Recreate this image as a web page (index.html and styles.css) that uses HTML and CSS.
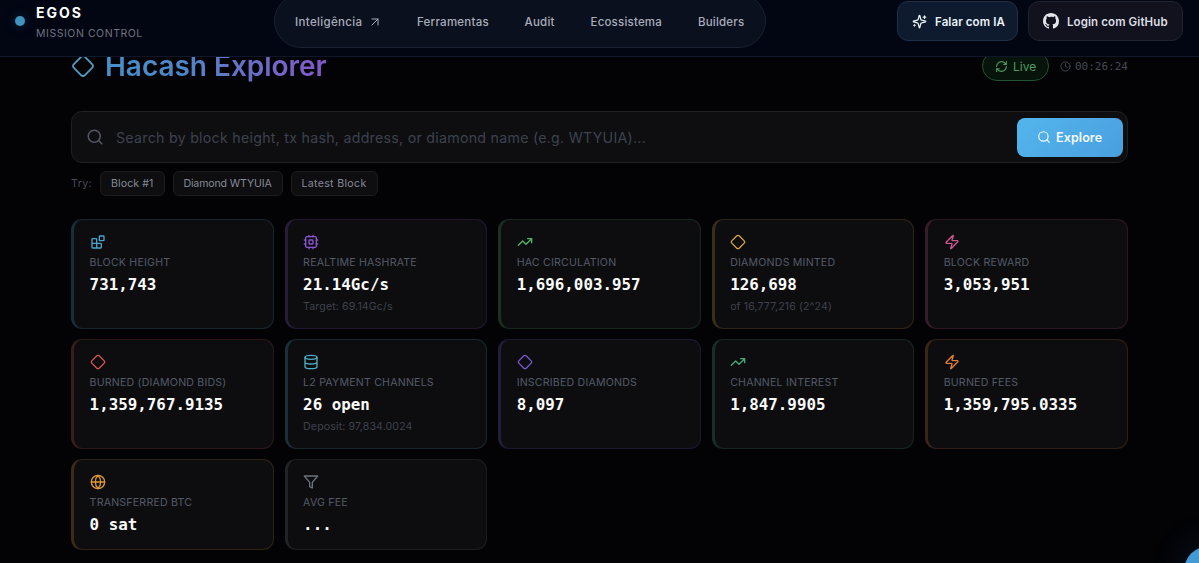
FILE: index.html
```html
<!DOCTYPE html>
<html lang="pt-BR">
<head>
<meta charset="utf-8">
<title>Hacash Explorer</title>
<link rel="stylesheet" href="styles.css">
</head>
<body>
<svg class="defs" aria-hidden="true">
  <symbol id="diamond" viewBox="0 0 24 24"><path d="M2.7 10.3a2.41 2.41 0 0 0 0 3.41l7.59 7.59a2.41 2.41 0 0 0 3.41 0l7.59-7.59a2.41 2.41 0 0 0 0-3.41l-7.59-7.59a2.41 2.41 0 0 0-3.41 0Z"/></symbol>
  <symbol id="trend" viewBox="0 0 24 24"><path d="m22 7-8.5 8.5-5-5L2 17M16 7h6v6"/></symbol>
  <symbol id="zap" viewBox="0 0 24 24"><path d="M4 14a1 1 0 0 1-.78-1.63l9.9-10.2a.5.5 0 0 1 .86.46l-1.92 6.02A1 1 0 0 0 13 10h7a1 1 0 0 1 .78 1.63l-9.9 10.2a.5.5 0 0 1-.86-.46l1.92-6.02A1 1 0 0 0 11 14z"/></symbol>
  <symbol id="search" viewBox="0 0 24 24"><circle cx="11" cy="11" r="8"/><path d="m21 21-4.3-4.3"/></symbol>
</svg>
<header class="topbar">
  <div class="brand">
    <i class="dot"></i>
    <div class="brand-text"><b>EGOS</b><span>MISSION CONTROL</span></div>
  </div>
  <nav class="nav">
    <a class="n1"><span>Inteligência</span> <svg class="icon arrow" viewBox="0 0 24 24"><path d="M6 6h12v12M6 18 18 6"/></svg></a>
    <a class="n2">Ferramentas</a><a class="n3">Audit</a><a class="n4">Ecossistema</a><a class="n5">Builders</a>
  </nav>
  <div class="actions">
    <button class="btn ai"><svg class="icon" viewBox="0 0 24 24"><path d="M9.94 15.5A2 2 0 0 0 8.5 14.06l-6.14-1.58a.5.5 0 0 1 0-.96L8.5 9.94A2 2 0 0 0 9.94 8.5l1.58-6.14a.5.5 0 0 1 .96 0l1.58 6.14a2 2 0 0 0 1.44 1.44l6.14 1.58a.5.5 0 0 1 0 .96l-6.14 1.58a2 2 0 0 0-1.44 1.44l-1.58 6.14a.5.5 0 0 1-.96 0zM20 3v4M22 5h-4M4 17v2M5 18H3"/></svg><span>Falar com IA</span></button>
    <button class="btn github"><svg class="octocat" viewBox="0 0 16 16"><path d="M8 0C3.58 0 0 3.58 0 8c0 3.54 2.29 6.53 5.47 7.59.4.07.55-.17.55-.38 0-.19-.01-.82-.01-1.49-2.01.37-2.53-.49-2.69-.94-.09-.23-.48-.94-.82-1.13-.28-.15-.68-.52-.01-.53.63-.01 1.08.58 1.23.82.72 1.21 1.87.87 2.33.66.07-.52.28-.87.51-1.07-1.78-.2-3.64-.89-3.64-3.95 0-.87.31-1.59.82-2.15-.08-.2-.36-1.02.08-2.12 0 0 .67-.21 2.2.82A7.6 7.6 0 0 1 8 3.87c.68 0 1.36.09 2 .27 1.53-1.04 2.2-.82 2.2-.82.44 1.1.16 1.92.08 2.12.51.56.82 1.27.82 2.15 0 3.07-1.87 3.75-3.65 3.95.29.25.54.73.54 1.48 0 1.07-.01 1.93-.01 2.2 0 .21.15.46.55.38A8.01 8.01 0 0 0 16 8c0-4.42-3.58-8-8-8z"/></svg><span>Login com GitHub</span></button>
  </div>
</header>
<main class="page">
  <div class="heading">
    <svg class="icon"><use href="#diamond"/></svg>
    <h1>Hacash Explorer</h1>
    <span class="live"><svg class="icon" viewBox="0 0 24 24"><path d="M3 12a9 9 0 0 1 9-9 9.75 9.75 0 0 1 6.74 2.74L21 8M21 3v5h-5M21 12a9 9 0 0 1-9 9 9.75 9.75 0 0 1-6.74-2.74L3 16M8 16H3v5"/></svg>Live</span>
    <span class="clock"><svg class="icon" viewBox="0 0 24 24"><circle cx="12" cy="12" r="10"/><path d="M12 6v6l4 2"/></svg>00:26:24</span>
  </div>
  <div class="search">
    <svg class="icon"><use href="#search"/></svg>
    <span class="placeholder">Search by block height, tx hash, address, or diamond name (e.g. WTYUIA)...</span>
    <button class="explore"><svg class="icon"><use href="#search"/></svg><span>Explore</span></button>
  </div>
  <div class="try"><span class="try-label">Try:</span><a class="c1">Block #1</a><a class="c2">Diamond WTYUIA</a><a class="c3">Latest Block</a></div>
  <section class="grid">
    <article class="card sky"><svg class="icon" viewBox="0 0 24 24"><rect x="14" y="3" width="7" height="7" rx="1"/><path d="M10 21V8a1 1 0 0 0-1-1H4a1 1 0 0 0-1 1v12a1 1 0 0 0 1 1h12a1 1 0 0 0 1-1v-5a1 1 0 0 0-1-1H3"/></svg><h2>BLOCK HEIGHT</h2><strong>731,743</strong></article>
    <article class="card purple"><svg class="icon" viewBox="0 0 24 24"><rect x="4" y="4" width="16" height="16" rx="2"/><rect x="9" y="9" width="6" height="6" rx="1"/><path d="M15 2v2M15 20v2M2 15h2M2 9h2M20 15h2M20 9h2M9 2v2M9 20v2"/></svg><h2>REALTIME HASHRATE</h2><strong>21.14Gc/s</strong><small>Target: 69.14Gc/s</small></article>
    <article class="card green"><svg class="icon"><use href="#trend"/></svg><h2>HAC CIRCULATION</h2><strong>1,696,003.957</strong></article>
    <article class="card amber"><svg class="icon"><use href="#diamond"/></svg><h2>DIAMONDS MINTED</h2><strong>126,698</strong><small>of 16,777,216 (2^24)</small></article>
    <article class="card pink"><svg class="icon"><use href="#zap"/></svg><h2>BLOCK REWARD</h2><strong>3,053,951</strong></article>
    <article class="card red"><svg class="icon"><use href="#diamond"/></svg><h2>BURNED (DIAMOND BIDS)</h2><strong>1,359,767.9135</strong></article>
    <article class="card cyan"><svg class="icon" viewBox="0 0 24 24"><ellipse cx="12" cy="5" rx="9" ry="3"/><path d="M3 5v14a9 3 0 0 0 18 0V5M3 12a9 3 0 0 0 18 0"/></svg><h2>L2 PAYMENT CHANNELS</h2><strong>26 open</strong><small>Deposit: 97,834.0024</small></article>
    <article class="card violet"><svg class="icon"><use href="#diamond"/></svg><h2>INSCRIBED DIAMONDS</h2><strong>8,097</strong></article>
    <article class="card emerald"><svg class="icon"><use href="#trend"/></svg><h2>CHANNEL INTEREST</h2><strong>1,847.9905</strong></article>
    <article class="card orange"><svg class="icon"><use href="#zap"/></svg><h2>BURNED FEES</h2><strong>1,359,795.0335</strong></article>
    <article class="card gold"><svg class="icon" viewBox="0 0 24 24"><circle cx="12" cy="12" r="10"/><path d="M12 2a14.5 14.5 0 0 0 0 20 14.5 14.5 0 0 0 0-20M2 12h20"/></svg><h2>TRANSFERRED BTC</h2><strong>0 sat</strong></article>
    <article class="card slate"><svg class="icon" viewBox="0 0 24 24"><path d="M22 3H2l8 9.46V19l4 2v-8.54z"/></svg><h2>AVG FEE</h2><strong>...</strong></article>
  </section>
</main>
<div class="fab"></div>
</body>
</html>
```

FILE: styles.css
```css
* { box-sizing: border-box; }
html, body { height: 100%; overflow: hidden; }
body { margin: 0; background: #030306; color: #fff; font-family: Inter, sans-serif; display: flex; flex-direction: column; }
.defs { display: none; }
.icon { fill: none; stroke: currentColor; stroke-width: 2; stroke-linecap: round; stroke-linejoin: round; flex: none; }
button { font: inherit; color: inherit; padding: 0; }

.topbar { flex: none; height: 71px; margin-top: -14px; padding: 0 16px 0 15px; background: #020512; border-bottom: 1px solid #11162a; display: grid; grid-template-columns: 259px 492px 1fr; align-items: center; z-index: 1; }
.brand { display: flex; align-items: center; gap: 11px; }
.dot { width: 10px; height: 10px; border-radius: 50%; background: #3f94bd; box-shadow: 0 0 12px rgba(56, 160, 220, .3); }
.brand-text { display: flex; flex-direction: column; gap: 4px; padding-top: 3px; }
.brand-text b { font-size: 14px; line-height: 17px; letter-spacing: 2px; }
.brand-text span { font-size: 10.5px; line-height: 17px; letter-spacing: .55px; color: #70737f; }
.nav { height: 54px; border: 1px solid #1b2132; border-radius: 27px; background: #0b101f; display: flex; align-items: center; padding-left: 20px; font-size: 11.5px; font-weight: 500; letter-spacing: .05px; color: #a9adb9; white-space: nowrap; }
.nav a { flex: none; padding-top: 1px; }
.nav .n1 { width: 122px; display: flex; align-items: center; gap: 7px; letter-spacing: .35px; }
.n2 { width: 107.5px; letter-spacing: .25px; }
.n3 { width: 66px; letter-spacing: .25px; }
.n4 { width: 107.5px; letter-spacing: .2px; }
.n5 { letter-spacing: .2px; }
.arrow { width: 12px; height: 12px; }
.actions { display: flex; justify-content: flex-end; gap: 10px; }
.btn { height: 40px; border-radius: 11px; display: flex; align-items: center; font-size: 11.5px; font-weight: 600; letter-spacing: .1px; white-space: nowrap; }
.btn span { padding-top: 1px; }
.ai { width: 121px; padding-left: 14px; gap: 8px; background: #0e1b2e; border: 1px solid #1e3047; color: #eaf3fa; }
.ai .icon { width: 15px; height: 15px; }
.github { width: 155px; padding-left: 14px; gap: 8px; background: #11121e; border: 1px solid #212330; color: #dcdde3; }
.octocat { width: 16px; height: 16px; fill: #e4e5ea; flex: none; }

.page { flex: none; width: 1057px; margin-left: 71px; }
.heading { height: 40px; margin-top: -11px; display: flex; align-items: center; }
.heading > .icon { width: 24px; height: 24px; color: #4b9fc4; stroke-width: 1.8; }
h1 { margin: 0 auto 0 10px; font-size: 28px; line-height: 36px; font-weight: 600; letter-spacing: -.03px; background: linear-gradient(90deg, #4690c9, #4f86c8 35%, #8259c8 95%); -webkit-background-clip: text; background-clip: text; color: transparent; }
.live { width: 67px; height: 30px; border: 1px solid #235330; border-radius: 15px; background: #06140c; color: #4c9b60; display: flex; align-items: center; gap: 5px; padding-left: 12px; font-size: 12px; }
.live .icon { width: 13px; height: 13px; }
.clock { margin-left: 11px; width: 68px; display: flex; align-items: center; gap: 4px; color: #464955; font: 11px "DejaVu Sans Mono", monospace; }
.clock .icon { width: 11px; height: 11px; }

.search { margin-top: 25px; height: 52px; border: 1px solid #202024; border-radius: 11px; background: #0e0e10; display: flex; align-items: center; padding: 0 4px 0 14px; }
.search > .icon { width: 18px; height: 18px; color: #525765; }
.placeholder { margin: 0 auto 0 12px; color: #3c424f; font-size: 14.2px; letter-spacing: .27px; white-space: nowrap; }
.explore { width: 106px; height: 39px; border: 0; border-radius: 8px; background: linear-gradient(135deg, #53b5ec, #4a9fdf); display: flex; align-items: center; gap: 5px; padding-left: 20px; font-size: 12.5px; font-weight: 600; letter-spacing: .1px; color: #f4faff; }
.explore .icon { width: 14px; height: 14px; }

.try { margin-top: 8px; height: 25px; display: flex; gap: 8px; align-items: center; font-size: 10.6px; color: #464b58; }
.try-label { width: 21px; letter-spacing: .4px; }
.try a { height: 25px; border: 1px solid #1c1c20; border-radius: 6px; background: #0e0e11; color: #858a97; display: flex; align-items: center; justify-content: center; white-space: nowrap; }
.c1 { width: 64.5px; letter-spacing: .1px; }
.c2 { width: 110px; letter-spacing: -.15px; }
.try .c3 { width: 87px; letter-spacing: .33px; }

.grid { margin-top: 23px; display: grid; grid-template-columns: repeat(5, 1fr); grid-template-rows: 110px 110px 91px; gap: 9.8px 10.6px; }
.card { --tone: 120, 130, 150; border: 1px solid rgba(var(--tone), .16); border-left: 3px solid rgba(var(--tone), .22); border-radius: 11px; background: #0d0d0f; padding: 14px 0 0 15.6px; display: flex; flex-direction: column; align-items: flex-start; color: rgb(var(--tone)); white-space: nowrap; }
.card .icon { width: 16px; height: 16px; }
h2 { margin: 4px 0 0; font-size: 10.6px; line-height: 17px; font-weight: 400; letter-spacing: .2px; color: #535a68; }
.card strong { font: bold 15.85px/20px "DejaVu Sans Mono", monospace; margin-top: 4px; color: #fafafa; }
.card small { font-size: 10.6px; line-height: 14px; letter-spacing: .12px; margin-top: 5px; color: #3e424d; }
.sky { --tone: 76, 163, 202; }
.purple { --tone: 137, 85, 211; }
.green { --tone: 84, 178, 105; }
.amber { --tone: 217, 164, 61; }
.pink { --tone: 205, 85, 145; }
.red { --tone: 217, 83, 83; }
.cyan { --tone: 75, 174, 197; }
.violet { --tone: 119, 88, 209; }
.emerald { --tone: 68, 169, 120; }
.orange { --tone: 224, 125, 58; }
.gold { --tone: 221, 151, 57; }
.slate { --tone: 107, 114, 128; }

.fab { position: fixed; left: 1184px; top: 546px; width: 50px; height: 50px; border-radius: 50%; background: #429bd5; box-shadow: 0 0 36px rgba(56, 130, 200, .18); }
```
